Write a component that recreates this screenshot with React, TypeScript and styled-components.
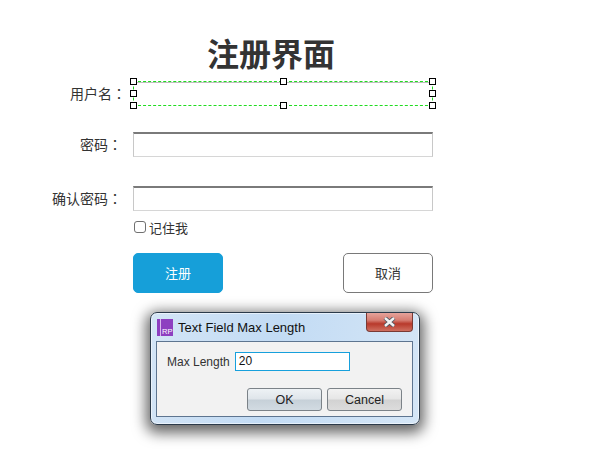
import React from "react";
import styled, { createGlobalStyle } from "styled-components";

const GlobalStyle = createGlobalStyle`
  html, body {
    margin: 0;
    padding: 0;
    background: #fff;
    font-family: "Noto Sans CJK SC", "Liberation Sans", sans-serif;
  }
`;

const Page = styled.div`
  position: relative;
  width: 597px;
  height: 461px;
  overflow: hidden;
  padding-top: 33px;
  box-sizing: border-box;
`;

const Title = styled.h1`
  margin: 0 0 0 133px;
  width: 276px;
  height: 48px;
  line-height: 38px;
  text-align: center;
  font-size: 32px;
  font-weight: 700;
  color: #333;
`;

const Row = styled.div<{ $gap: number }>`
  display: grid;
  grid-template-columns: 133px 300px;
  height: 25px;
  margin-bottom: ${(p) => p.$gap}px;
`;

const Label = styled.label<{ $inset: number }>`
  font-size: 14px;
  line-height: 24px;
  color: #333;
  text-align: right;
  padding-right: ${(p) => p.$inset}px;
`;

// the traditional face centres the full-width colon, as the reference does
const Colon = styled.span`
  font-family: "Noto Sans CJK TC", sans-serif;
`;

const Field = styled.div`
  height: 25px;
  box-sizing: border-box;
  background: #fff;
  border: 1px solid #c8c8c8;
  border-top: 2px solid #7a7a7a;
  border-bottom-color: #d6d6d6;
`;

const SelectedField = styled.div`
  position: relative;
  height: 25px;
  box-sizing: border-box;
  border: 1px dashed #1fdc1f;
  box-shadow: inset 0 1px 0 #bdbdbd;
`;

const Handle = styled.span<{ $x: number; $y: number }>`
  position: absolute;
  left: calc(${(p) => p.$x}% + ${(p) => p.$x / 100}px);
  top: calc(${(p) => p.$y}% + ${(p) => p.$y / 100}px);
  width: 7px;
  height: 7px;
  margin: -4px 0 0 -4px;
  box-sizing: border-box;
  background: #fff;
  border: 1px solid #000;
`;

const RememberRow = styled.div`
  display: flex;
  align-items: center;
  gap: 3px;
  margin: 4px 0 14px 134px;
  height: 24px;
  font-size: 13px;
  color: #333;
`;

const CheckBox = styled.span`
  width: 12px;
  height: 12px;
  box-sizing: border-box;
  border: 1px solid #707070;
  border-radius: 3px;
  background: #fff;
`;

const ButtonRow = styled.div`
  display: flex;
  justify-content: space-between;
  width: 300px;
  margin-left: 133px;
`;

const FormButton = styled.button<{ $primary?: boolean }>`
  width: 90px;
  height: 40px;
  padding: 0 0 2px;
  box-sizing: border-box;
  border-radius: 5px;
  border: 1px solid ${(p) => (p.$primary ? "#169fd9" : "#797979")};
  background: ${(p) => (p.$primary ? "#169fd9" : "#fff")};
  color: ${(p) => (p.$primary ? "#fff" : "#333")};
  font-family: inherit;
  font-size: 13px;
`;

const Dialog = styled.div`
  position: absolute;
  left: 150px;
  top: 312px;
  width: 270px;
  height: 113px;
  box-sizing: border-box;
  padding: 0 6px 7px 5px;
  display: flex;
  flex-direction: column;
  border: 1px solid #2b3a4a;
  border-radius: 7px;
  background: linear-gradient(100deg, #d4e5f6 0%, #c2dbf4 45%, #d5e6f6 100%);
  box-shadow: inset 0 0 0 1px rgba(255, 255, 255, 0.55), 0 4px 14px 4px rgba(0, 0, 0, 0.6);
`;

const TitleBar = styled.div`
  display: flex;
  align-items: center;
  gap: 5px;
  height: 28px;
  flex: none;
  padding-left: 1px;
  font-family: "Liberation Sans", sans-serif;
  font-size: 13px;
  color: #111;
`;

const AppIcon = styled.svg`
  width: 16px;
  height: 17px;
  flex: none;
  margin-top: 1px;
`;

const CloseButton = styled.div`
  position: absolute;
  right: 6px;
  top: 0;
  width: 47px;
  height: 19px;
  display: flex;
  align-items: center;
  justify-content: center;
  box-sizing: border-box;
  border: 1px solid #7a3a34;
  border-top: none;
  border-radius: 0 0 4px 4px;
  background: linear-gradient(#e6a39b 0%, #d67d72 40%, #b8392b 60%, #cf6f60 100%);
`;

const Panel = styled.div`
  flex: 1;
  box-sizing: border-box;
  border: 1px solid #5e7590;
  background: #f2f2f2;
  padding: 10px 10px 5px;
  display: flex;
  flex-direction: column;
  justify-content: space-between;
  font-family: "Liberation Sans", sans-serif;
`;

const LengthRow = styled.div`
  display: flex;
  align-items: center;
  gap: 5px;
  font-size: 12px;
  color: #333;
`;

const LengthInput = styled.div`
  width: 115px;
  height: 19px;
  box-sizing: border-box;
  border: 1px solid #17a0dc;
  background: #fff;
  padding-left: 3px;
  line-height: 17px;
  font-size: 12px;
  color: #111;
`;

const DialogActions = styled.div`
  display: flex;
  justify-content: flex-end;
  gap: 5px;
`;

const DialogButton = styled.button<{ $cool?: boolean }>`
  width: 75px;
  height: 23px;
  padding: 0;
  box-sizing: border-box;
  border: 1px solid #7b8288;
  border-radius: 3px;
  background: ${(p) =>
    p.$cool
      ? "linear-gradient(#eef2f5 0%, #dfe5ea 48%, #c6d0d8 52%, #d2dbe2 100%)"
      : "linear-gradient(#f2f2f2 0%, #e6e6e6 48%, #d2d2d2 52%, #dcdcdc 100%)"};
  font-family: "Liberation Sans", sans-serif;
  font-size: 12.5px;
  color: #222;
`;

const handles = [
  [0, 0],
  [50, 0],
  [100, 0],
  [0, 50],
  [100, 50],
  [0, 100],
  [50, 100],
  [100, 100],
];

export default function App() {
  return (
    <Page>
      <GlobalStyle />
      <Title>注册界面</Title>
      <Row $gap={26}>
        <Label $inset={7}>
          用户名<Colon>：</Colon>
        </Label>
        <SelectedField>
          {handles.map(([x, y]) => (
            <Handle key={`${x}-${y}`} $x={x} $y={y} />
          ))}
        </SelectedField>
      </Row>
      <Row $gap={29}>
        <Label $inset={11}>
          密码<Colon>：</Colon>
        </Label>
        <Field />
      </Row>
      <Row $gap={0}>
        <Label $inset={11}>
          确认密码<Colon>：</Colon>
        </Label>
        <Field />
      </Row>
      <RememberRow>
        <CheckBox />
        记住我
      </RememberRow>
      <ButtonRow>
        <FormButton $primary>注册</FormButton>
        <FormButton>取消</FormButton>
      </ButtonRow>
      <Dialog>
        <TitleBar>
          <AppIcon viewBox="0 0 16 17">
            <rect width="16" height="17" fill="#8e3fc0" />
            <rect x="3" width="1" height="17" fill="#d9b8ec" />
            <text x="5" y="14.5" fontSize="7.5" fontFamily="Liberation Sans" fill="#fff">
              RP
            </text>
          </AppIcon>
          Text Field Max Length
        </TitleBar>
        <CloseButton>
          <svg width="13" height="10" viewBox="0 0 13 10">
            <path d="M2 1 L11 9 M11 1 L2 9" stroke="#4f5560" strokeWidth="4.2" />
            <path d="M2 1 L11 9 M11 1 L2 9" stroke="#f2f2f2" strokeWidth="2.4" />
          </svg>
        </CloseButton>
        <Panel>
          <LengthRow>
            Max Length
            <LengthInput>20</LengthInput>
          </LengthRow>
          <DialogActions>
            <DialogButton $cool>OK</DialogButton>
            <DialogButton>Cancel</DialogButton>
          </DialogActions>
        </Panel>
      </Dialog>
    </Page>
  );
}
